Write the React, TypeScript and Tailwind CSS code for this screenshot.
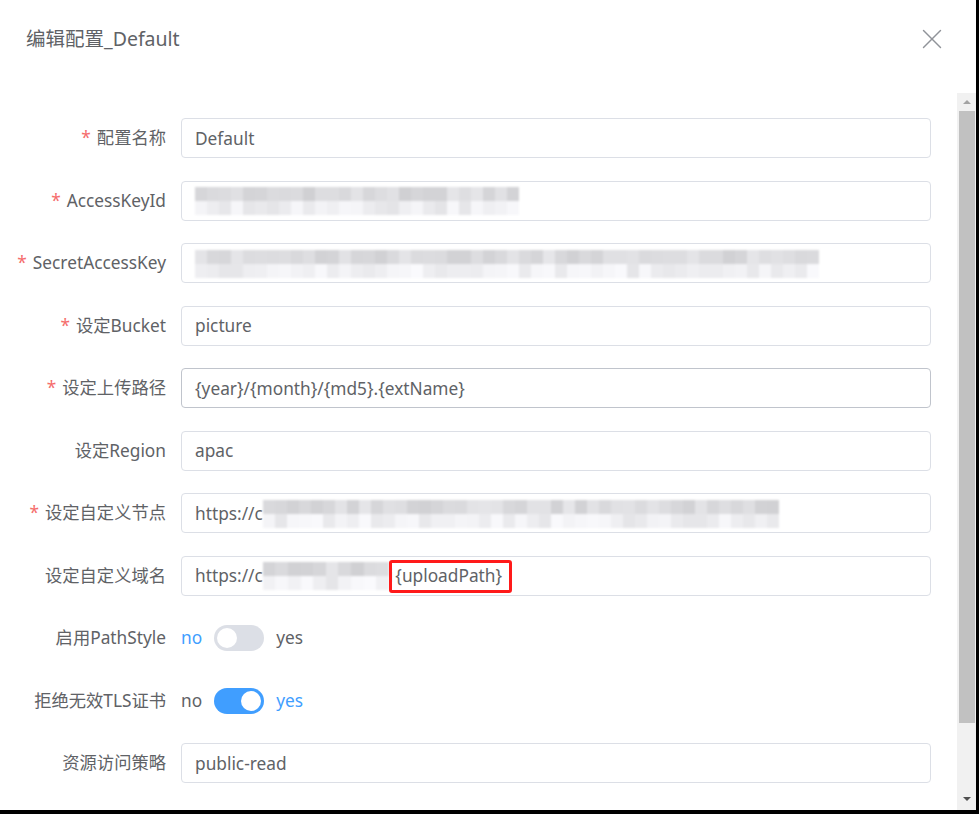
import { X } from "lucide-react";

// grey pixel mosaic standing in for the blurred secrets
function Mosaic({ width, seed }: { width: number; seed: number }) {
  const cols = Math.floor(width / 12);
  const shade = (i: number, row: number) => {
    const n = Math.abs(Math.sin((i + 1) * 12.9898 + seed * 78.233 + row * 3.1)) * 43758.5453;
    const f = n - Math.floor(n);
    const base = row === 0 ? 208 : 228;
    const v = Math.round(base + f * 22);
    return `rgb(${v},${v},${v + 3})`;
  };
  return (
    <span className="inline-flex flex-col align-middle blur-[0.8px]" style={{ width }}>
      <span className="flex h-[14px]">
        {Array.from({ length: cols }).map((_, i) => (
          <span key={i} className="h-full flex-1" style={{ background: shade(i, 0) }} />
        ))}
      </span>
      <span className="flex h-[14px]">
        {Array.from({ length: cols }).map((_, i) => (
          <span key={i} className="h-full flex-1" style={{ background: shade(i, 1) }} />
        ))}
      </span>
    </span>
  );
}

function Label({ text, required }: { text: string; required?: boolean }) {
  return (
    <div className="w-[181px] shrink-0 pr-[15px] text-right text-[17.3px] text-[#606266]">
      {required && <span className="mr-[6px] text-[#f56c6c]">*</span>}
      {text}
    </div>
  );
}

function Field({
  label,
  required,
  focused,
  children,
}: {
  label: string;
  required?: boolean;
  focused?: boolean;
  children: React.ReactNode;
}) {
  return (
    <div className="flex h-10 shrink-0 items-center">
      <Label text={label} required={required} />
      <div
        className={`flex h-10 flex-1 items-center overflow-hidden rounded-[4px] border px-[13px] pt-[1px] text-[17.3px] text-[#606266] ${
          focused ? "border-[#c0c4cc]" : "border-[#dcdfe6]"
        }`}
      >
        {children}
      </div>
    </div>
  );
}

function Toggle({ label, on }: { label: string; on: boolean }) {
  return (
    <div className="flex h-10 shrink-0 items-center">
      <Label text={label} />
      <div className="flex items-center text-[17.3px]">
        <span className={on ? "text-[#606266]" : "text-[#409eff]"}>no</span>
        <span
          className={`mx-[12px] flex h-[26px] w-[50px] items-center rounded-full p-[3px] ${
            on ? "justify-end bg-[#409eff]" : "justify-start bg-[#dcdfe6]"
          }`}
        >
          <span className="h-[20px] w-[20px] rounded-full bg-white" />
        </span>
        <span className={on ? "text-[#409eff]" : "text-[#606266]"}>yes</span>
      </div>
    </div>
  );
}

export default function App() {
  return (
    <div
      className="h-[814px] w-[979px] overflow-hidden bg-black"
      style={{ fontFamily: '"Noto Sans", "Noto Sans CJK SC", sans-serif' }}
    >
      <div className="flex h-[810px] w-[976px] flex-col bg-white">
        <div className="flex h-[93px] shrink-0 items-start justify-between pl-[26px] pr-[27px] pt-[24px]">
          <span className="text-[19.5px] text-[#606266]">编辑配置_Default</span>
          <X className="-mt-[2px] h-[34px] w-[34px] text-[#909399]" strokeWidth={1} />
        </div>
        <div className="flex min-h-0 flex-1">
          <div className="flex flex-1 flex-col gap-[22.5px] overflow-hidden pr-[26px] pt-[25px]">
            <Field label="配置名称" required>
              Default
            </Field>
            <Field label="AccessKeyId" required>
              <Mosaic width={324} seed={1} />
            </Field>
            <Field label="SecretAccessKey" required>
              <Mosaic width={624} seed={2} />
            </Field>
            <Field label="设定Bucket" required>
              picture
            </Field>
            <Field label="设定上传路径" required focused>
              {"{year}/{month}/{md5}.{extName}"}
            </Field>
            <Field label="设定Region">apac</Field>
            <Field label="设定自定义节点" required>
              https://c
              <Mosaic width={516} seed={3} />
            </Field>
            <Field label="设定自定义域名">
              https://c
              <Mosaic width={126} seed={4} />
              <span className="text-[#aaa]">i</span>
              <span className="relative ml-[2px]">
                {"{uploadPath}"}
                <span className="absolute -bottom-[4px] -left-[6px] -right-[10px] -top-[3px] rounded-[3px] border-[3px] border-[#ff1a1a]" />
              </span>
            </Field>
            <Toggle label="启用PathStyle" on={false} />
            <Toggle label="拒绝无效TLS证书" on />
            <Field label="资源访问策略">public-read</Field>
          </div>
          <div className="flex w-[19px] shrink-0 flex-col items-center bg-[#f1f1f1]">
            <div className="flex h-[18px] items-center">
              <span className="h-0 w-0 border-x-[4px] border-b-[4px] border-x-transparent border-b-[#a3a3a3]" />
            </div>
            <div className="h-[612px] w-[16px] bg-[#c1c1c1]" />
            <div className="flex-1" />
            <div className="flex h-[22px] items-center">
              <span className="h-0 w-0 border-x-[4px] border-t-[4px] border-x-transparent border-t-[#505050]" />
            </div>
          </div>
        </div>
      </div>
    </div>
  );
}
